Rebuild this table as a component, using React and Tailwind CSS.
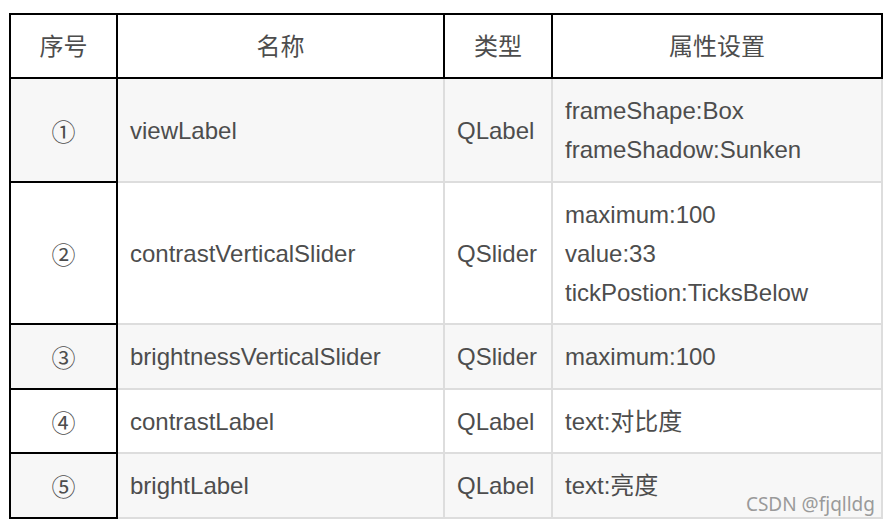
import React from 'react'

const rows = [
  { no: '①', name: 'viewLabel', type: 'QLabel', props: ['frameShape:Box', 'frameShadow:Sunken'], h: 'h-[104px]' },
  { no: '②', name: 'contrastVerticalSlider', type: 'QSlider', props: ['maximum:100', 'value:33', 'tickPostion:TicksBelow'], h: 'h-[142px]' },
  { no: '③', name: 'brightnessVerticalSlider', type: 'QSlider', props: ['maximum:100'], h: 'h-[65px]' },
  { no: '④', name: 'contrastLabel', type: 'QLabel', props: ['text:对比度'], h: 'h-[64px]' },
  { no: '⑤', name: 'brightLabel', type: 'QLabel', props: ['text:亮度'], h: 'h-[65px]' },
]

const App = () => {
  return (
    <div className="relative w-[889px] h-[528px] bg-white pl-[9px] pt-[13px] font-['Liberation_Sans','Noto_Sans_CJK_SC',sans-serif] text-[24px] leading-[39px] text-[#4d4d4d]">
      <table className="border-collapse table-fixed w-[874px]">
        <colgroup>
          <col className="w-[107px]" />
          <col className="w-[327px]" />
          <col className="w-[108px]" />
          <col className="w-[330px]" />
        </colgroup>
        <thead>
          <tr className="h-[64px] bg-white">
            <th className="border-2 border-black font-normal text-center">序号</th>
            <th className="border-2 border-black font-normal text-center">名称</th>
            <th className="border-2 border-black font-normal text-center">类型</th>
            <th className="border-2 border-black font-normal text-center">属性设置</th>
          </tr>
        </thead>
        <tbody>
          {rows.map((r, idx) => (
            <tr key={r.no} className={`${r.h} ${idx % 2 === 0 ? 'bg-[#f7f7f7]' : 'bg-white'}`}>
              <td className="border-2 border-black text-center align-middle font-['Noto_Sans_CJK_SC',sans-serif]">{r.no}</td>
              <td className="border-2 border-[#dddddd] px-[12px] align-middle">{r.name}</td>
              <td className="border-2 border-[#dddddd] px-[12px] align-middle">{r.type}</td>
              <td className="border-2 border-[#dddddd] px-[12px] align-middle">
                {r.props.map((p) => (
                  <div key={p}>{p}</div>
                ))}
              </td>
            </tr>
          ))}
        </tbody>
      </table>

      {/* watermark */}
      <div className="absolute right-[14px] top-[491px] font-['Noto_Sans',sans-serif] text-[19px] leading-[26px] text-[#9a9a9a]">
        CSDN @fjqlldg
      </div>
    </div>
  )
}

export default App
